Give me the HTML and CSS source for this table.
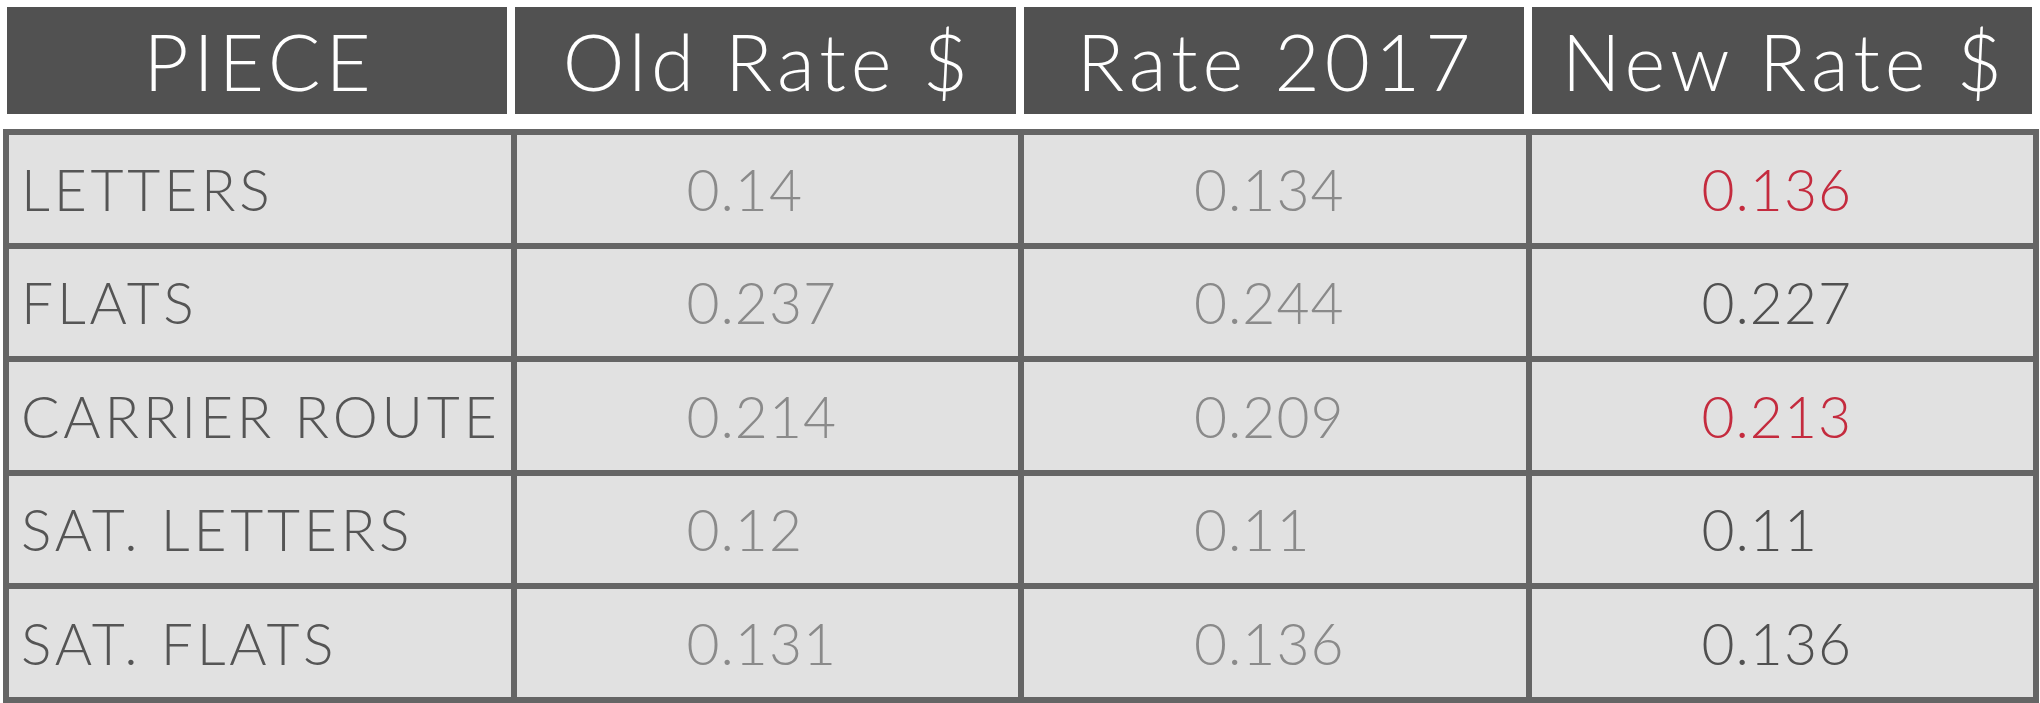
FILE: index.html
```html
<!DOCTYPE html>
<html lang="en">
<head>
  <meta charset="UTF-8" />
  <meta name="viewport" content="width=device-width, initial-scale=1.0"/>
  <title>Postage Rates</title>
  <link rel="stylesheet" href="styles.css">
</head>
<body>
  <div class="head">
    <div class="head-cell">PIECE</div>
    <div class="head-cell">Old Rate $</div>
    <div class="head-cell">Rate 2017</div>
    <div class="head-cell">New Rate $</div>
  </div>

  <div class="rates">
    <div class="label">LETTERS</div>
    <div class="num old">0.14</div>
    <div class="num old">0.134</div>
    <div class="num up">0.136</div>

    <div class="label">FLATS</div>
    <div class="num old">0.237</div>
    <div class="num old">0.244</div>
    <div class="num">0.227</div>

    <div class="label">CARRIER ROUTE</div>
    <div class="num old">0.214</div>
    <div class="num old">0.209</div>
    <div class="num up">0.213</div>

    <div class="label">SAT. LETTERS</div>
    <div class="num old">0.12</div>
    <div class="num old">0.11</div>
    <div class="num">0.11</div>

    <div class="label">SAT. FLATS</div>
    <div class="num old">0.131</div>
    <div class="num old">0.136</div>
    <div class="num">0.136</div>
  </div>
</body>
</html>
```

FILE: styles.css
```css
html, body {
  margin: 0;
  background: #fff;
  font-family: Lato, "Liberation Sans", sans-serif;
  font-weight: 300;
}
.head {
  display: grid;
  grid-template-columns: repeat(4, 1fr);
  gap: 8px;
  height: 107px;
  margin: 7px 8px 0 7px;
}
.head-cell {
  background: #515151;
  color: #fff;
  font-size: 78px;
  display: flex;
  align-items: center;
  justify-content: center;
  letter-spacing: 5px;
  padding-left: 5px;
}
.rates {
  display: grid;
  grid-template-columns: repeat(4, 1fr);
  grid-auto-rows: 107.5px;
  gap: 6px;
  padding: 6px;
  margin: 15px 1px 0 3px;
  background: #656565;
}
.rates div {
  background: #e1e1e1;
  display: flex;
  align-items: center;
  font-size: 57px;
  color: #555;
}
.rates .label {
  padding-left: 12px;
  letter-spacing: 3.8px;
}
.rates .num {
  padding-left: 170px;
  letter-spacing: 1px;
  color: #505050;
}
.rates .old {
  color: #8a8a8a;
}
.rates .up {
  color: #c42b3e;
}
```
